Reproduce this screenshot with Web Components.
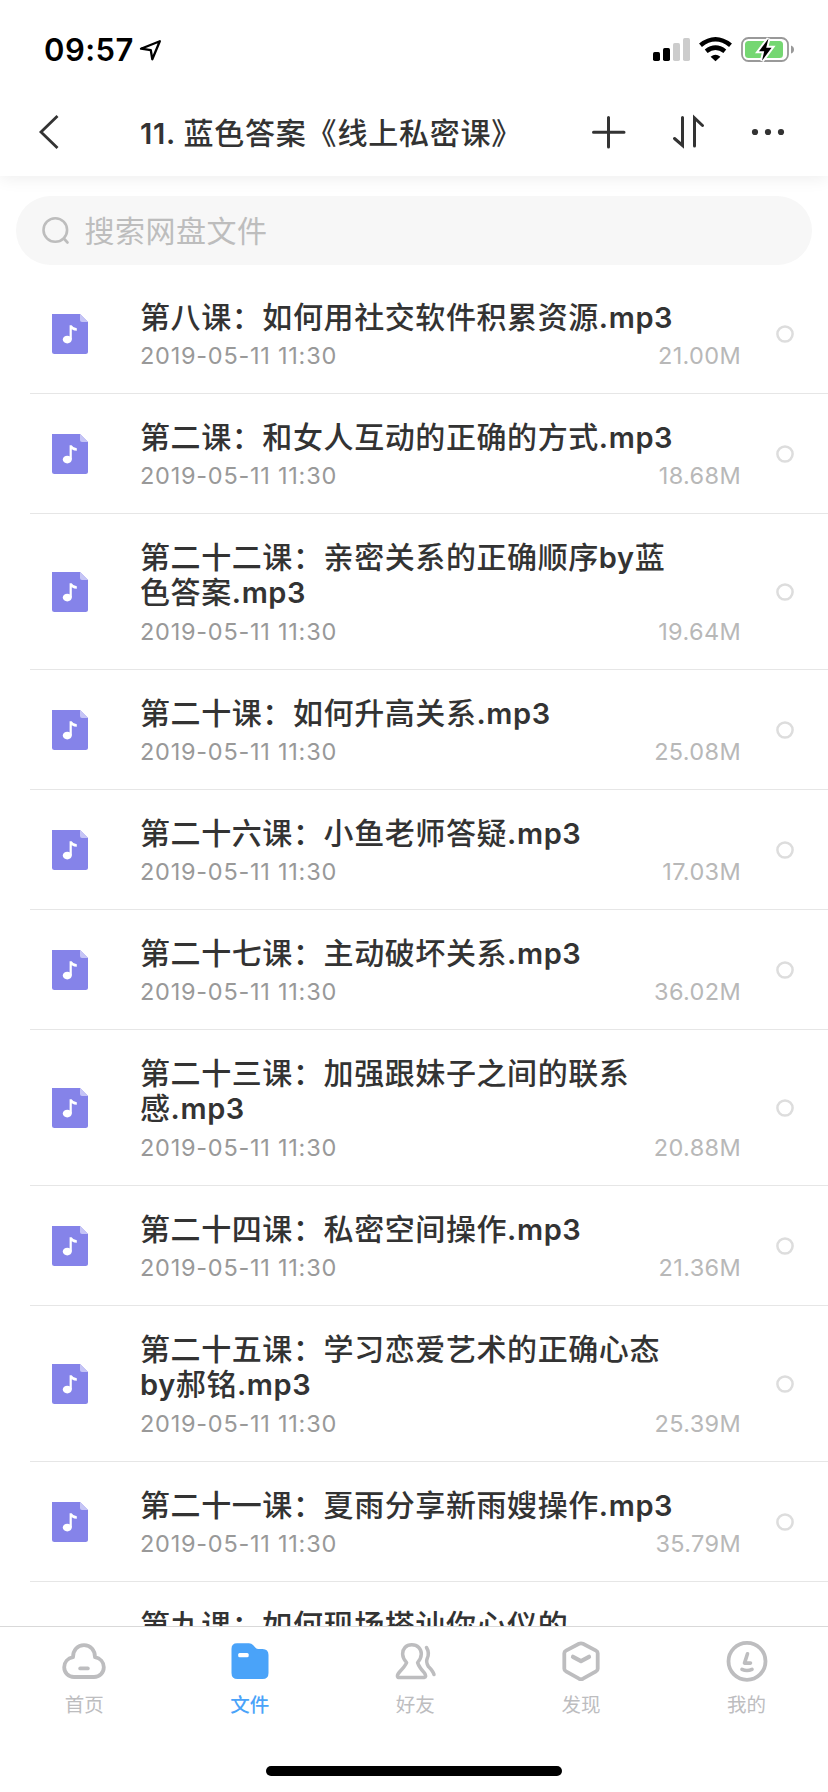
<!DOCTYPE html>
<html lang="zh-CN">
<head>
<meta charset="utf-8">
<title>11. 蓝色答案《线上私密课》</title>
<style>
html,body{margin:0;padding:0;background:#fff}
body{font-family:Inter,"Noto Sans CJK SC",sans-serif;color:#333;overflow:hidden}
</style>
</head>
<body>
<disk-app></disk-app>
<script>
const define = (name, html, setup) => {
  const t = document.createElement('template');
  t.innerHTML = html;
  customElements.define(name, class extends HTMLElement {
    connectedCallback() {
      if (this.shadowRoot) return;
      this.attachShadow({mode: 'open'}).append(t.content.cloneNode(true));
      if (setup) setup(this, this.shadowRoot);
    }
  });
};

/* Text whose Chinese and Latin runs carry their own tracking. */
define('mixed-text', `<style>
:host{display:block;white-space:nowrap;font-family:Inter,"Noto Sans CJK SC",sans-serif}
.c{font-family:"Noto Sans CJK SC",sans-serif;font-size:30px;font-weight:500;letter-spacing:var(--cjk-track,.59px);text-spacing-trim:space-all}
.l{font-size:29px;font-weight:600;letter-spacing:var(--latin-track,.6px);white-space:pre}
.line{height:35px;line-height:35px}
</style>`, (el, root) => {
  for (const text of (el.getAttribute('text') || '').split('|')) {
    const line = document.createElement('div');
    line.className = 'line';
    for (const run of text.match(/[\x00-\x7f]+|[^\x00-\x7f]+/g) || []) {
      const s = document.createElement('span');
      s.className = run.charCodeAt(0) < 128 ? 'l' : 'c';
      s.textContent = run;
      line.append(s);
    }
    root.append(line);
  }
});

define('status-bar', `<style>
:host{display:flex;height:88px;box-sizing:border-box;padding:0 34px 0 44px;justify-content:space-between;color:#000}
.time{display:flex}
b{font:600 31px/36px Inter,sans-serif;margin-top:32px;letter-spacing:.45px;width:95px;white-space:nowrap}
svg{display:block}
.arrow{margin-top:38px}
.icons{margin-top:36px}
</style>
<div class="time"><b>09:57</b>
<svg class="arrow" width="24" height="24" viewBox="0 0 24 24"><path d="M2 10.7 20.8 3.2 13.3 21.2 11.8 12.2Z" fill="none" stroke="#000" stroke-width="2.3" stroke-linejoin="round"/></svg></div>
<svg class="icons" width="142" height="28" viewBox="652 36 142 28">
<g><rect x="653" y="52" width="7" height="9" rx="1.7"/><rect x="663" y="48" width="7" height="13" rx="1.7"/><g fill="#ccc"><rect x="673" y="43" width="7" height="18" rx="1.7"/><rect x="683" y="38" width="7" height="23" rx="1.7"/></g></g>
<g fill="none" stroke="#000" stroke-width="4.6"><path d="M700.5 45.2Q715.5 33.3 730.5 45.2"/><path d="M706.2 51.3Q715.5 44 724.8 51.3"/></g><path d="M710.6 56.7Q715.5 52.9 720.4 56.7L715.5 61.2Z"/>
<rect x="742" y="38" width="46" height="23" rx="6.5" fill="none" stroke="#999" stroke-width="1.8"/><path d="M791 45.5q3 1 3 4t-3 4Z" fill="#999"/>
<rect x="745" y="41" width="38" height="17" rx="3.5" fill="#75d772"/>
<path d="M768.5 38.6 759 51.2H764.2L762 60.8 771.6 47.8H766.2Z" fill="#000" stroke="#fff" stroke-width="4" paint-order="stroke"/>
</svg>`);

define('nav-bar', `<style>
:host{display:flex;height:88px;align-items:center;position:relative;box-shadow:0 2px 16px rgba(0,0,0,.075);background:#fff;clip-path:inset(0 0 -24px 0)}
svg{display:block}
.back{margin-left:38px;width:103px}
mixed-text{width:447px;--latin-track:.75px;--cjk-track:.78px;margin-top:-2px;margin-left:-1px;margin-right:1px}
</style>
<svg class="back" width="103" height="36" viewBox="0 0 103 36"><path d="M19.5 2 3 18 19.5 34" fill="none" stroke="#333" stroke-width="2.8"/></svg>
<mixed-text text="11. 蓝色答案《线上私密课》"></mixed-text>
<svg width="200" height="36" viewBox="588 114 200 36" fill="none" stroke="#333" stroke-width="3" stroke-linecap="round"><path d="M608.5 117.5V147M593.5 132.3H624"/><path d="M682.5 117.5V145.5L674.5 138.5M694.5 146V118L702.5 125.5"/><g fill="#333" stroke="none"><circle cx="755" cy="132" r="3.1"/><circle cx="768" cy="132" r="3.1"/><circle cx="781" cy="132" r="3.1"/></g></svg>`);

define('search-box', `<style>
:host{display:flex;height:69px;margin:20px 16px 9px;border-radius:35px;background:#f7f7f7;align-items:center;color:#bdbdbd;font:400 30px/44px "Noto Sans CJK SC",sans-serif;letter-spacing:.5px}
svg{margin:0 14.5px 0 25px;display:block}
span{margin-top:-3px}
</style>
<svg width="29" height="29" viewBox="0 0 29 29" fill="none" stroke="#bdbdbd" stroke-width="2.6" stroke-linecap="round"><circle cx="14.3" cy="14" r="11.8"/><path d="M22.8 22.5 26.5 26.5"/></svg><span>搜索网盘文件</span>`);

define('file-row', `<style>
:host{display:grid;grid-template-columns:110px 601px 87px;height:120px;margin-left:30px;border-bottom:1px solid #e6e6e6;box-sizing:border-box;align-items:center;padding-top:1px}
:host([tall]){height:156px}
.body{display:flex;flex-direction:column}
mixed-text{margin:-1px 0 1px}
:host([tall]) .body{margin-top:1px}
:host([tall]) mixed-text{margin:-2px 0 2px}
.meta{display:flex;justify-content:space-between;height:30px;font-size:23.5px;line-height:30px;color:#999;margin-top:7px;white-space:nowrap;margin-bottom:-1px}
.date{letter-spacing:.75px}
.size{color:#b8b8b8;letter-spacing:.35px}
svg{display:block}
.file{margin-left:22px}
.ring{margin-left:35px}
</style>
<svg class="file" width="36" height="40" viewBox="0 0 36 40"><path d="M0 0H28L36 8V37.5Q36 40 33.5 40H2.5Q0 40 0 37.5Z" fill="#8583e9"/><path d="M28 0 36 8H30Q28 8 28 6Z" fill="#c5c4f6"/><ellipse cx="15.3" cy="25.6" rx="4.5" ry="3.9" fill="#fff"/><path d="M17.6 25V11.3H19.6Q21 14 24.8 14.2V16.8Q22 16.8 19.8 15.3V25.5Z" fill="#fff"/></svg>
<div class="body"><div class="meta"><span class="date">2019-05-11 11:30</span><span class="size"></span></div></div>
<svg class="ring" width="18" height="18" viewBox="0 0 18 18"><circle cx="9" cy="9" r="7.6" fill="none" stroke="#ddd" stroke-width="2.5"/></svg>`, (el, root) => {
  const name = document.createElement('mixed-text');
  name.setAttribute('text', el.getAttribute('name'));
  root.querySelector('.body').prepend(name);
  root.querySelector('.size').textContent = el.getAttribute('size');
  if (el.getAttribute('name').includes('|')) el.setAttribute('tall', '');
});

define('tab-item', `<style>
:host{display:flex;flex:0 0 165.6px;flex-direction:column;align-items:center;color:#bdbdbf;font:400 19.5px/28px "Noto Sans CJK SC",sans-serif;padding-top:13px;box-sizing:border-box}
:host([active]){color:#4aa3f9;font-weight:500}
div{height:44px}
span{margin-top:6px}
</style><div><slot name="icon"></slot></div><span><slot></slot></span>`);

define('tab-bar', `<style>
:host{display:flex;flex-direction:column;height:166px;background:#fff;border-top:1px solid #d9d9d9;position:relative;box-sizing:border-box;align-items:center}
nav{display:flex;width:828px;height:137px;padding-left:1.4px;box-sizing:border-box}
svg{display:block;fill:none;stroke:#bdbdbf;stroke-width:3.8;stroke-linecap:round;stroke-linejoin:round}
i{display:block;width:296px;height:10px;border-radius:5px;background:#000;margin-top:2px}
</style>
<nav>
<tab-item><svg slot="icon" width="44" height="44" viewBox="0 0 44 44"><path d="M12 37C6.3 37 2.2 32.6 2.2 27.3C2.2 22.3 5.8 18.2 11 17.2C11 10 15.5 5.2 22 5.2S33 10 33 17.2C38.2 18.2 41.8 22.3 41.8 27.3C41.8 32.6 37.7 37 32 37Z"/><path d="M18.2 28.4H25.8"/></svg>首页</tab-item>
<tab-item active><svg slot="icon" width="44" height="44" viewBox="0 0 44 44"><path d="M9 3.2H21Q23.5 3.2 25 4.9L27.5 7.7Q28.6 8.9 30.5 8.9H34.5Q40.5 8.9 40.5 14.9V33Q40.5 39 34.5 39H9.5Q3.5 39 3.5 33V8.7Q3.5 3.2 9 3.2Z" fill="#4aa3f9" stroke="none"/><rect x="10.2" y="13" width="10.5" height="4.2" rx="1.5" fill="#fff" stroke="none"/></svg>文件</tab-item>
<tab-item><svg slot="icon" width="44" height="44" viewBox="0 0 44 44"><path d="M18.8 4.8C12.8 4.8 9.6 9 9.6 14Q9.8 18.5 13.6 22.6Q12.2 26 6.5 32Q3.2 35.8 5 37.4H31.2Q34 37 31.6 33.2Q26 27 24.6 22.6Q28.2 18.5 28.3 14C28.3 9 24.8 4.8 18.8 4.8Z" stroke-width="3.5"/><path d="M33.5 7.5Q36.8 13 34.2 18.5Q32.7 22 35.4 26.5Q40 31 41 34.5" stroke-width="3.5"/></svg>好友</tab-item>
<tab-item><svg slot="icon" width="44" height="44" viewBox="0 0 44 44"><path d="M20 3.8Q22 2.8 24 3.8L37 10.6Q38.7 11.5 38.7 13.3V28.7Q38.7 30.5 37 31.4L24 38.7Q22 39.7 20 38.7L7 31.4Q5.3 30.5 5.3 28.7V13.3Q5.3 11.5 7 10.6Z"/><path d="M14 16.8 22 21.2 30 16.8" stroke-width="4.2"/></svg>发现</tab-item>
<tab-item><svg slot="icon" width="44" height="44" viewBox="0 0 44 44"><circle cx="22" cy="21.3" r="18.5"/><path d="M22.5 13.8 19.5 23.1H25.5" stroke-width="3.6"/><path d="M17 29.3Q22 31.8 27 29.3" stroke-width="3.6"/></svg>我的</tab-item>
</nav><i></i>`);

define('disk-app', `<style>
:host{display:flex;flex-direction:column;width:828px;height:1792px;overflow:hidden;background:#fff}
main{flex:1;min-height:0;overflow:hidden}
status-bar,nav-bar,tab-bar{flex-shrink:0}
</style>
<status-bar></status-bar><nav-bar></nav-bar>
<main><search-box></search-box>
<file-row name="第八课：如何用社交软件积累资源.mp3" size="21.00M"></file-row>
<file-row name="第二课：和女人互动的正确的方式.mp3" size="18.68M"></file-row>
<file-row name="第二十二课：亲密关系的正确顺序by蓝|色答案.mp3" size="19.64M"></file-row>
<file-row name="第二十课：如何升高关系.mp3" size="25.08M"></file-row>
<file-row name="第二十六课：小鱼老师答疑.mp3" size="17.03M"></file-row>
<file-row name="第二十七课：主动破坏关系.mp3" size="36.02M"></file-row>
<file-row name="第二十三课：加强跟妹子之间的联系|感.mp3" size="20.88M"></file-row>
<file-row name="第二十四课：私密空间操作.mp3" size="21.36M"></file-row>
<file-row name="第二十五课：学习恋爱艺术的正确心态|by郝铭.mp3" size="25.39M"></file-row>
<file-row name="第二十一课：夏雨分享新雨嫂操作.mp3" size="35.79M"></file-row>
<file-row name="第九课：如何现场搭讪你心仪的|.mp3"></file-row>
</main><tab-bar></tab-bar>`);
</script>
</body>
</html>
